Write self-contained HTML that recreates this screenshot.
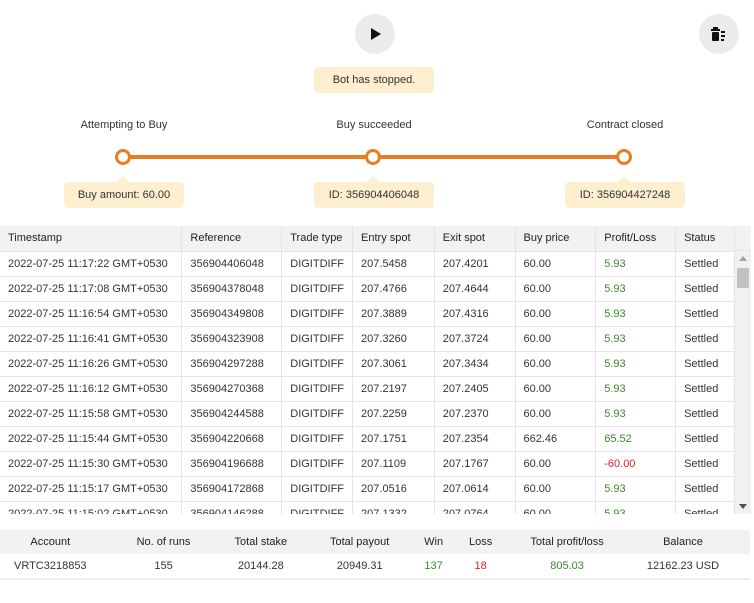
<!DOCTYPE html>
<html><head><style>
*{box-sizing:border-box;margin:0;padding:0}
body{width:754px;height:603px;background:#fff;font-family:"Liberation Sans",Arial,sans-serif;font-size:11px;color:#333;position:relative;overflow:hidden}
.abs{position:absolute}
.circ{width:40px;height:40px;border-radius:50%;background:#ebebeb}
.tip{background:#fdefcf;border-radius:4px;text-align:center;line-height:26px;height:26px;color:#333}
.lbl{text-align:center;width:140px}
.dot{width:16px;height:16px;border-radius:50%;border:3px solid #e87d22;background:#fff}
table{border-collapse:collapse}
.t td,.t th{height:25px;padding:0 8px;text-align:left;white-space:nowrap;border-right:1px solid #e4e4e4;border-bottom:1px solid #e4e4e4;font-weight:normal}
.t th{background:#f2f2f2;color:#222}
.g{color:#3a8a2e}.r{color:#e0202a}
.s td,.s th{text-align:center;height:24px;font-weight:normal;white-space:nowrap}
.s th{background:#f2f2f2;color:#222}
</style></head><body>
<div class="abs circ" style="left:355px;top:14px"><svg width="40" height="40"><path d="M16 14 L26 20 L16 26Z" fill="#111"/></svg></div>
<div class="abs circ" style="left:699px;top:14px"><svg width="40" height="40"><rect x="12" y="15" width="9" height="2" fill="#111"/><rect x="14" y="13" width="5" height="2" fill="#111"/><rect x="13" y="18" width="7" height="9" rx="1" fill="#111"/><rect x="22" y="17" width="4" height="2" fill="#111"/><rect x="22" y="21" width="4" height="2" fill="#111"/><rect x="22" y="25" width="3" height="2" fill="#111"/></svg></div>
<div class="abs tip" style="left:314px;top:67px;width:120px">Bot has stopped.</div>
<div class="abs lbl" style="left:54px;top:119px">Attempting to Buy</div>
<div class="abs lbl" style="left:304px;top:119px">Buy succeeded</div>
<div class="abs lbl" style="left:555px;top:119px">Contract closed</div>
<div class="abs" style="left:124px;top:155px;width:500px;height:4px;background:#e87d22"></div>
<div class="abs dot" style="left:115px;top:149px"></div>
<div class="abs dot" style="left:365px;top:149px"></div>
<div class="abs dot" style="left:616px;top:149px"></div>
<div class="abs" style="left:117px;top:176px;border:6px solid transparent;border-bottom-color:#fdefcf;border-top:0"></div>
<div class="abs" style="left:367px;top:176px;border:6px solid transparent;border-bottom-color:#fdefcf;border-top:0"></div>
<div class="abs" style="left:618px;top:176px;border:6px solid transparent;border-bottom-color:#fdefcf;border-top:0"></div>
<div class="abs tip" style="left:64px;top:182px;width:120px">Buy amount: 60.00</div>
<div class="abs tip" style="left:314px;top:182px;width:120px">ID: 356904406048</div>
<div class="abs tip" style="left:565px;top:182px;width:120px">ID: 356904427248</div>

<div class="abs" style="left:0;top:226px;width:751px;height:288px;overflow:hidden">
<div class="abs" style="left:0;top:0;width:751px;height:25px;background:#f2f2f2;border-bottom:1px solid #e4e4e4"></div>
<table class="t" style="width:735px;position:relative">
<colgroup><col style="width:182px"><col style="width:100px"><col style="width:70px"><col style="width:82px"><col style="width:81px"><col style="width:81px"><col style="width:80px"><col style="width:59px"></colgroup>
<tr><th>Timestamp</th><th>Reference</th><th>Trade type</th><th>Entry spot</th><th>Exit spot</th><th>Buy price</th><th>Profit/Loss</th><th>Status</th></tr>
<tr><td>2022-07-25 11:17:22 GMT+0530</td><td>356904406048</td><td>DIGITDIFF</td><td>207.5458</td><td>207.4201</td><td>60.00</td><td class="g">5.93</td><td>Settled</td></tr>
<tr><td>2022-07-25 11:17:08 GMT+0530</td><td>356904378048</td><td>DIGITDIFF</td><td>207.4766</td><td>207.4644</td><td>60.00</td><td class="g">5.93</td><td>Settled</td></tr>
<tr><td>2022-07-25 11:16:54 GMT+0530</td><td>356904349808</td><td>DIGITDIFF</td><td>207.3889</td><td>207.4316</td><td>60.00</td><td class="g">5.93</td><td>Settled</td></tr>
<tr><td>2022-07-25 11:16:41 GMT+0530</td><td>356904323908</td><td>DIGITDIFF</td><td>207.3260</td><td>207.3724</td><td>60.00</td><td class="g">5.93</td><td>Settled</td></tr>
<tr><td>2022-07-25 11:16:26 GMT+0530</td><td>356904297288</td><td>DIGITDIFF</td><td>207.3061</td><td>207.3434</td><td>60.00</td><td class="g">5.93</td><td>Settled</td></tr>
<tr><td>2022-07-25 11:16:12 GMT+0530</td><td>356904270368</td><td>DIGITDIFF</td><td>207.2197</td><td>207.2405</td><td>60.00</td><td class="g">5.93</td><td>Settled</td></tr>
<tr><td>2022-07-25 11:15:58 GMT+0530</td><td>356904244588</td><td>DIGITDIFF</td><td>207.2259</td><td>207.2370</td><td>60.00</td><td class="g">5.93</td><td>Settled</td></tr>
<tr><td>2022-07-25 11:15:44 GMT+0530</td><td>356904220668</td><td>DIGITDIFF</td><td>207.1751</td><td>207.2354</td><td>662.46</td><td class="g">65.52</td><td>Settled</td></tr>
<tr><td>2022-07-25 11:15:30 GMT+0530</td><td>356904196688</td><td>DIGITDIFF</td><td>207.1109</td><td>207.1767</td><td>60.00</td><td class="r">-60.00</td><td>Settled</td></tr>
<tr><td>2022-07-25 11:15:17 GMT+0530</td><td>356904172868</td><td>DIGITDIFF</td><td>207.0516</td><td>207.0614</td><td>60.00</td><td class="g">5.93</td><td>Settled</td></tr>
<tr><td>2022-07-25 11:15:02 GMT+0530</td><td>356904146288</td><td>DIGITDIFF</td><td>207.1332</td><td>207.0764</td><td>60.00</td><td class="g">5.93</td><td>Settled</td></tr>
</table>
<div class="abs" style="left:735px;top:25px;width:16px;height:263px;background:#f1f1f1"></div>
<div class="abs" style="left:737px;top:42px;width:12px;height:20px;background:#c1c1c1"></div>
<div class="abs" style="left:739px;top:30px;border:4px solid transparent;border-bottom:5px solid #a3a3a3;border-top:0"></div>
<div class="abs" style="left:739px;top:278px;border:4px solid transparent;border-top:5px solid #505050;border-bottom:0"></div>
</div>

<div class="abs" style="left:0;top:530px;width:750px;border-bottom:2px solid #eee">
<table class="s" style="width:750px">
<colgroup><col style="width:101px"><col style="width:127px"><col style="width:69px"><col style="width:130px"><col style="width:14px"><col style="width:76px"><col style="width:98px"><col style="width:135px"></colgroup>
<tr><th>Account</th><th>No. of runs</th><th>Total stake</th><th>Total payout</th><th>Win</th><th>Loss</th><th>Total profit/loss</th><th>Balance</th></tr>
<tr><td>VRTC3218853</td><td>155</td><td>20144.28</td><td>20949.31</td><td class="g">137</td><td class="r">18</td><td class="g">805.03</td><td>12162.23 USD</td></tr>
</table></div>
</body></html>
